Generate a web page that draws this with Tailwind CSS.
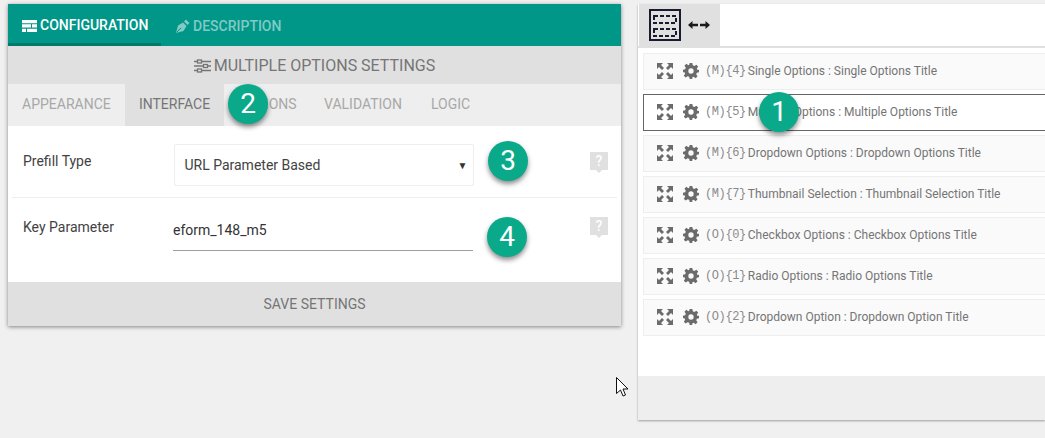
<!DOCTYPE html>
<html><head><meta charset="utf-8"><script src="https://cdn.jsdelivr.net/npm/@tailwindcss/browser@4"></script></head>
<body class="m-0 bg-[#f0f0f0] font-['Roboto',sans-serif]">
<div class="relative w-[1045px] h-[438px] overflow-hidden flex items-start pt-[4px]">
  <!-- left card -->
  <div class="ml-[8px] w-[613px] h-[322px] flex flex-col bg-white shadow-[0_1px_4px_rgba(0,0,0,0.45)]">
    <div class="h-[42px] bg-[#009688] flex text-[14px] font-medium">
      <div class="w-[153px] h-[42px] border-b-[3px] border-[#00796b] flex items-center pt-[4px] pl-[14px] gap-[3px] text-white">
        <svg width="15" height="12" viewBox="0 0 15 12"><path fill="#fff" d="M0 0h15v3.300H0zM0 4.300h9v3.300H0zM10 4.300h5v3.300h-5zM0 8.700h4v3.300H0zM5 8.700h10v3.300H5z"/></svg>
        <span>CONFIGURATION</span>
      </div>
      <div class="flex items-center pt-[2px] pl-[15px] gap-[3px] text-[#80cbc4]">
        <svg width="14" height="14" viewBox="0 0 14 14"><path fill="#80cbc4" d="M0 14 L2 6.500 L7 3.500 L10.500 7 L7.500 12 Z M8 2.500 L10 .500 L13.500 4 L11.500 6 Z"/><path stroke="#009688" stroke-width="1" d="M.5 13.500 L5 9"/></svg>
        <span>DESCRIPTION</span>
      </div>
    </div>
    <div class="h-[38px] bg-[#e0e0e0] flex items-center justify-center gap-[3px] pt-[1px] text-[16px] text-[#757575]">
      <svg width="17" height="14" viewBox="0 0 17 14" fill="none" stroke="#757575" stroke-width="1.300"><path d="M0 2.500h3M8 2.500h9M0 7h9M14 7h3M0 11.500h3M8 11.500h9"/><rect x="3.500" y="1" width="4" height="3"/><rect x="9.500" y="5.500" width="4" height="3"/><rect x="3.500" y="10" width="4" height="3"/></svg>
      <span>MULTIPLE OPTIONS SETTINGS</span>
    </div>
    <div class="h-[42px] bg-[#eeeeee] flex text-[14px] text-[#a8a8a8] pb-[1px]">
      <div class="w-[117px] flex items-center pl-[14px]">APPEARANCE</div>
      <div class="w-[99px] -mb-[1px] flex items-center justify-center bg-[#e0e0e0] text-[#757575] pb-[1px]">INTERFACE</div>
      <div class="w-[100px] flex items-center pl-[14px]">OPTIONS</div>
      <div class="w-[107px] flex items-center">VALIDATION</div>
      <div class="flex items-center">LOGIC</div>
    </div>
    <div class="flex-1 flex flex-col px-[4px] text-[14px] text-[#424242]">
      <div class="h-[72px] border-b border-[#eeeeee] flex items-start">
        <span class="ml-[11px] mt-[26px] leading-[18px]">Prefill Type</span>
        <div class="ml-[83px] mt-[18px] w-[300px] h-[42px] border border-[#eeeeee] rounded-[2px] flex items-center justify-between pl-[9px] pr-[6px]">
          <span>URL Parameter Based</span><span class="text-[10px] text-[#333]">▼</span>
        </div>
        <svg class="ml-[116px] mt-[26px]" width="18" height="21" viewBox="0 0 18 21"><path fill="#e0e0e0" d="M0 0h18v18h-6l-3 3-3-3H0z"/><text x="9" y="14" text-anchor="middle" font-size="14" font-family="Roboto" fill="#fff" font-weight="500">?</text></svg>
      </div>
      <div class="flex-1 flex items-start">
        <span class="ml-[11px] mt-[20px] leading-[18px]">Key Parameter</span>
        <div class="ml-[59px] mt-[13px] w-[300px] h-[40px] border-b border-[#9e9e9e] flex items-center text-[#333] pb-[1px]">eform_148_m5</div>
        <svg class="ml-[117px] mt-[19px]" width="18" height="21" viewBox="0 0 18 21"><path fill="#e0e0e0" d="M0 0h18v18h-6l-3 3-3-3H0z"/><text x="9" y="14" text-anchor="middle" font-size="14" font-family="Roboto" fill="#fff" font-weight="500">?</text></svg>
      </div>
    </div>
    <div class="h-[44px] bg-[#e0e0e0] flex items-center justify-center text-[14px] text-[#757575]">SAVE SETTINGS</div>
  </div>
  <!-- right panel -->
  <div class="ml-[17px] flex-1 h-[416px] flex flex-col bg-white shadow-[0_1px_2px_rgba(0,0,0,0.35)]">
    <div class="h-[44px] border-b-[2px] border-[#e0e0e0] flex shrink-0">
      <div class="ml-[1px] w-[81px] h-[42px] bg-[#e0e0e0] flex items-center pl-[10px] gap-[7px]">
        <svg width="32" height="32" viewBox="0 0 32 32" fill="none" stroke="#1a1a2e"><rect x="1" y="1" width="30" height="30" stroke-width="2"/><g stroke-width="2" stroke-dasharray="4 2"><rect x="5" y="7" width="22" height="7"/><rect x="5" y="20" width="22" height="7"/></g></svg>
        <svg width="22" height="8" viewBox="0 0 22 8" fill="#1a1a1a"><path d="M0 4 4.500 0v2.700H10v2.600H4.500V8zM22 4 17.500 0v2.700H12v2.600h5.500V8z"/></svg>
      </div>
    </div>
    <div class="flex flex-col gap-[4px] pl-[5px] pt-[5px] text-[12px] text-[#757575]">
      <div class="h-[37px] shrink-0 bg-[#fafafa] border border-[#eeeeee] border-r-0 flex items-center pl-[13px] pb-[1px]"><svg class="mr-[10px]" width="16" height="16" viewBox="0 0 16 16" fill="#6b6b6b"><path d="M0 0h6L4 2l3 3-2 2-3-3-2 2zM16 0v6l-2-2-3 3-2-2 3-3-2-2zM0 16v-6l2 2 3-3 2 2-3 3 2 2zM16 16h-6l2-2-3-3 2-2 3 3 2-2z"/></svg><svg class="mr-[6px]" width="16" height="16" viewBox="0 0 24 24" fill="#6b6b6b"><path fill-rule="evenodd" d="M10 0h4l.7 3.500 2.300 1 3-2 2.800 2.800-2 3 1 2.300L24 10v4l-3.200.7-1 2.300 2 3-2.800 2.800-3-2-2.300 1L14 24h-4l-.7-3.200-2.300-1-3 2-2.800-2.800 2-3-1-2.300L0 14v-4l3.200-.7 1-2.300-2-3L5 1.200l3 2 1.300-.7zM12 8a4 4 0 100 8 4 4 0 000-8z"/></svg><span class="font-['Liberation_Mono'] text-[#8a8a8a] text-[12px] tracking-[-0.4px] mr-[2px]">(M){4}</span><span>Single Options : Single Options Title</span></div>
      <div class="h-[37px] shrink-0 bg-white border border-[#666666] border-r-0 flex items-center pl-[13px] pb-[1px]"><svg class="mr-[10px]" width="16" height="16" viewBox="0 0 16 16" fill="#6b6b6b"><path d="M0 0h6L4 2l3 3-2 2-3-3-2 2zM16 0v6l-2-2-3 3-2-2 3-3-2-2zM0 16v-6l2 2 3-3 2 2-3 3 2 2zM16 16h-6l2-2-3-3 2-2 3 3 2-2z"/></svg><svg class="mr-[6px]" width="16" height="16" viewBox="0 0 24 24" fill="#6b6b6b"><path fill-rule="evenodd" d="M10 0h4l.7 3.500 2.300 1 3-2 2.800 2.800-2 3 1 2.300L24 10v4l-3.200.7-1 2.300 2 3-2.800 2.800-3-2-2.300 1L14 24h-4l-.7-3.200-2.300-1-3 2-2.800-2.800 2-3-1-2.300L0 14v-4l3.200-.7 1-2.300-2-3L5 1.200l3 2 1.300-.7zM12 8a4 4 0 100 8 4 4 0 000-8z"/></svg><span class="font-['Liberation_Mono'] text-[#8a8a8a] text-[12px] tracking-[-0.4px] mr-[2px]">(M){5}</span><span>Multiple Options : Multiple Options Title</span></div>
      <div class="h-[37px] shrink-0 bg-[#fafafa] border border-[#eeeeee] border-r-0 flex items-center pl-[13px] pb-[1px]"><svg class="mr-[10px]" width="16" height="16" viewBox="0 0 16 16" fill="#6b6b6b"><path d="M0 0h6L4 2l3 3-2 2-3-3-2 2zM16 0v6l-2-2-3 3-2-2 3-3-2-2zM0 16v-6l2 2 3-3 2 2-3 3 2 2zM16 16h-6l2-2-3-3 2-2 3 3 2-2z"/></svg><svg class="mr-[6px]" width="16" height="16" viewBox="0 0 24 24" fill="#6b6b6b"><path fill-rule="evenodd" d="M10 0h4l.7 3.500 2.300 1 3-2 2.800 2.800-2 3 1 2.300L24 10v4l-3.200.7-1 2.300 2 3-2.800 2.800-3-2-2.300 1L14 24h-4l-.7-3.200-2.300-1-3 2-2.800-2.800 2-3-1-2.300L0 14v-4l3.200-.7 1-2.300-2-3L5 1.200l3 2 1.300-.7zM12 8a4 4 0 100 8 4 4 0 000-8z"/></svg><span class="font-['Liberation_Mono'] text-[#8a8a8a] text-[12px] tracking-[-0.4px] mr-[2px]">(M){6}</span><span>Dropdown Options : Dropdown Options Title</span></div>
      <div class="h-[37px] shrink-0 bg-[#fafafa] border border-[#eeeeee] border-r-0 flex items-center pl-[13px] pb-[1px]"><svg class="mr-[10px]" width="16" height="16" viewBox="0 0 16 16" fill="#6b6b6b"><path d="M0 0h6L4 2l3 3-2 2-3-3-2 2zM16 0v6l-2-2-3 3-2-2 3-3-2-2zM0 16v-6l2 2 3-3 2 2-3 3 2 2zM16 16h-6l2-2-3-3 2-2 3 3 2-2z"/></svg><svg class="mr-[6px]" width="16" height="16" viewBox="0 0 24 24" fill="#6b6b6b"><path fill-rule="evenodd" d="M10 0h4l.7 3.500 2.300 1 3-2 2.800 2.800-2 3 1 2.300L24 10v4l-3.200.7-1 2.300 2 3-2.800 2.800-3-2-2.300 1L14 24h-4l-.7-3.200-2.300-1-3 2-2.800-2.800 2-3-1-2.300L0 14v-4l3.200-.7 1-2.300-2-3L5 1.200l3 2 1.300-.7zM12 8a4 4 0 100 8 4 4 0 000-8z"/></svg><span class="font-['Liberation_Mono'] text-[#8a8a8a] text-[12px] tracking-[-0.4px] mr-[2px]">(M){7}</span><span>Thumbnail Selection : Thumbnail Selection Title</span></div>
      <div class="h-[37px] shrink-0 bg-[#fafafa] border border-[#eeeeee] border-r-0 flex items-center pl-[13px] pb-[1px]"><svg class="mr-[10px]" width="16" height="16" viewBox="0 0 16 16" fill="#6b6b6b"><path d="M0 0h6L4 2l3 3-2 2-3-3-2 2zM16 0v6l-2-2-3 3-2-2 3-3-2-2zM0 16v-6l2 2 3-3 2 2-3 3 2 2zM16 16h-6l2-2-3-3 2-2 3 3 2-2z"/></svg><svg class="mr-[6px]" width="16" height="16" viewBox="0 0 24 24" fill="#6b6b6b"><path fill-rule="evenodd" d="M10 0h4l.7 3.500 2.300 1 3-2 2.800 2.800-2 3 1 2.300L24 10v4l-3.200.7-1 2.300 2 3-2.800 2.800-3-2-2.300 1L14 24h-4l-.7-3.200-2.300-1-3 2-2.800-2.800 2-3-1-2.300L0 14v-4l3.200-.7 1-2.300-2-3L5 1.200l3 2 1.300-.7zM12 8a4 4 0 100 8 4 4 0 000-8z"/></svg><span class="font-['Liberation_Mono'] text-[#8a8a8a] text-[12px] tracking-[-0.4px] mr-[2px]">(O){0}</span><span>Checkbox Options : Checkbox Options Title</span></div>
      <div class="h-[37px] shrink-0 bg-[#fafafa] border border-[#eeeeee] border-r-0 flex items-center pl-[13px] pb-[1px]"><svg class="mr-[10px]" width="16" height="16" viewBox="0 0 16 16" fill="#6b6b6b"><path d="M0 0h6L4 2l3 3-2 2-3-3-2 2zM16 0v6l-2-2-3 3-2-2 3-3-2-2zM0 16v-6l2 2 3-3 2 2-3 3 2 2zM16 16h-6l2-2-3-3 2-2 3 3 2-2z"/></svg><svg class="mr-[6px]" width="16" height="16" viewBox="0 0 24 24" fill="#6b6b6b"><path fill-rule="evenodd" d="M10 0h4l.7 3.500 2.300 1 3-2 2.800 2.800-2 3 1 2.300L24 10v4l-3.200.7-1 2.300 2 3-2.800 2.800-3-2-2.300 1L14 24h-4l-.7-3.200-2.300-1-3 2-2.800-2.800 2-3-1-2.300L0 14v-4l3.200-.7 1-2.300-2-3L5 1.200l3 2 1.300-.7zM12 8a4 4 0 100 8 4 4 0 000-8z"/></svg><span class="font-['Liberation_Mono'] text-[#8a8a8a] text-[12px] tracking-[-0.4px] mr-[2px]">(O){1}</span><span>Radio Options : Radio Options Title</span></div>
      <div class="h-[37px] shrink-0 bg-[#fafafa] border border-[#eeeeee] border-r-0 flex items-center pl-[13px] pb-[1px]"><svg class="mr-[10px]" width="16" height="16" viewBox="0 0 16 16" fill="#6b6b6b"><path d="M0 0h6L4 2l3 3-2 2-3-3-2 2zM16 0v6l-2-2-3 3-2-2 3-3-2-2zM0 16v-6l2 2 3-3 2 2-3 3 2 2zM16 16h-6l2-2-3-3 2-2 3 3 2-2z"/></svg><svg class="mr-[6px]" width="16" height="16" viewBox="0 0 24 24" fill="#6b6b6b"><path fill-rule="evenodd" d="M10 0h4l.7 3.500 2.300 1 3-2 2.800 2.800-2 3 1 2.300L24 10v4l-3.200.7-1 2.300 2 3-2.800 2.800-3-2-2.300 1L14 24h-4l-.7-3.200-2.300-1-3 2-2.800-2.800 2-3-1-2.300L0 14v-4l3.200-.7 1-2.300-2-3L5 1.200l3 2 1.300-.7zM12 8a4 4 0 100 8 4 4 0 000-8z"/></svg><span class="font-['Liberation_Mono'] text-[#8a8a8a] text-[12px] tracking-[-0.4px] mr-[2px]">(O){2}</span><span>Dropdown Option : Dropdown Option Title</span></div>
    </div>
    <div class="mt-auto h-[44px] bg-[#eeeeee] shrink-0"></div>
  </div>
  <!-- callouts -->
  <div class="absolute left-[759px] top-[92px] w-[40px] h-[40px] rounded-full bg-[#0aa98a] text-white text-[28px] flex items-center justify-center shadow-[0_3px_5px_rgba(0,0,0,0.45)]">1</div>
  <div class="absolute left-[228px] top-[84px] w-[40px] h-[40px] rounded-full bg-[#0aa98a] text-white text-[28px] flex items-center justify-center shadow-[0_3px_5px_rgba(0,0,0,0.45)]">2</div>
  <div class="absolute left-[488px] top-[141px] w-[40px] h-[40px] rounded-full bg-[#0aa98a] text-white text-[28px] flex items-center justify-center shadow-[0_3px_5px_rgba(0,0,0,0.45)]">3</div>
  <div class="absolute left-[487px] top-[217px] w-[40px] h-[40px] rounded-full bg-[#0aa98a] text-white text-[28px] flex items-center justify-center shadow-[0_3px_5px_rgba(0,0,0,0.45)]">4</div>
  <svg class="absolute left-[616px] top-[377px]" width="13" height="21" viewBox="0 0 13 21"><path fill="#fff" stroke="#111" stroke-width="1" d="M.5.500v16l4-3.500 2.500 6 2.500-1-2.500-6h5z"/></svg>
</div>
</body></html>
